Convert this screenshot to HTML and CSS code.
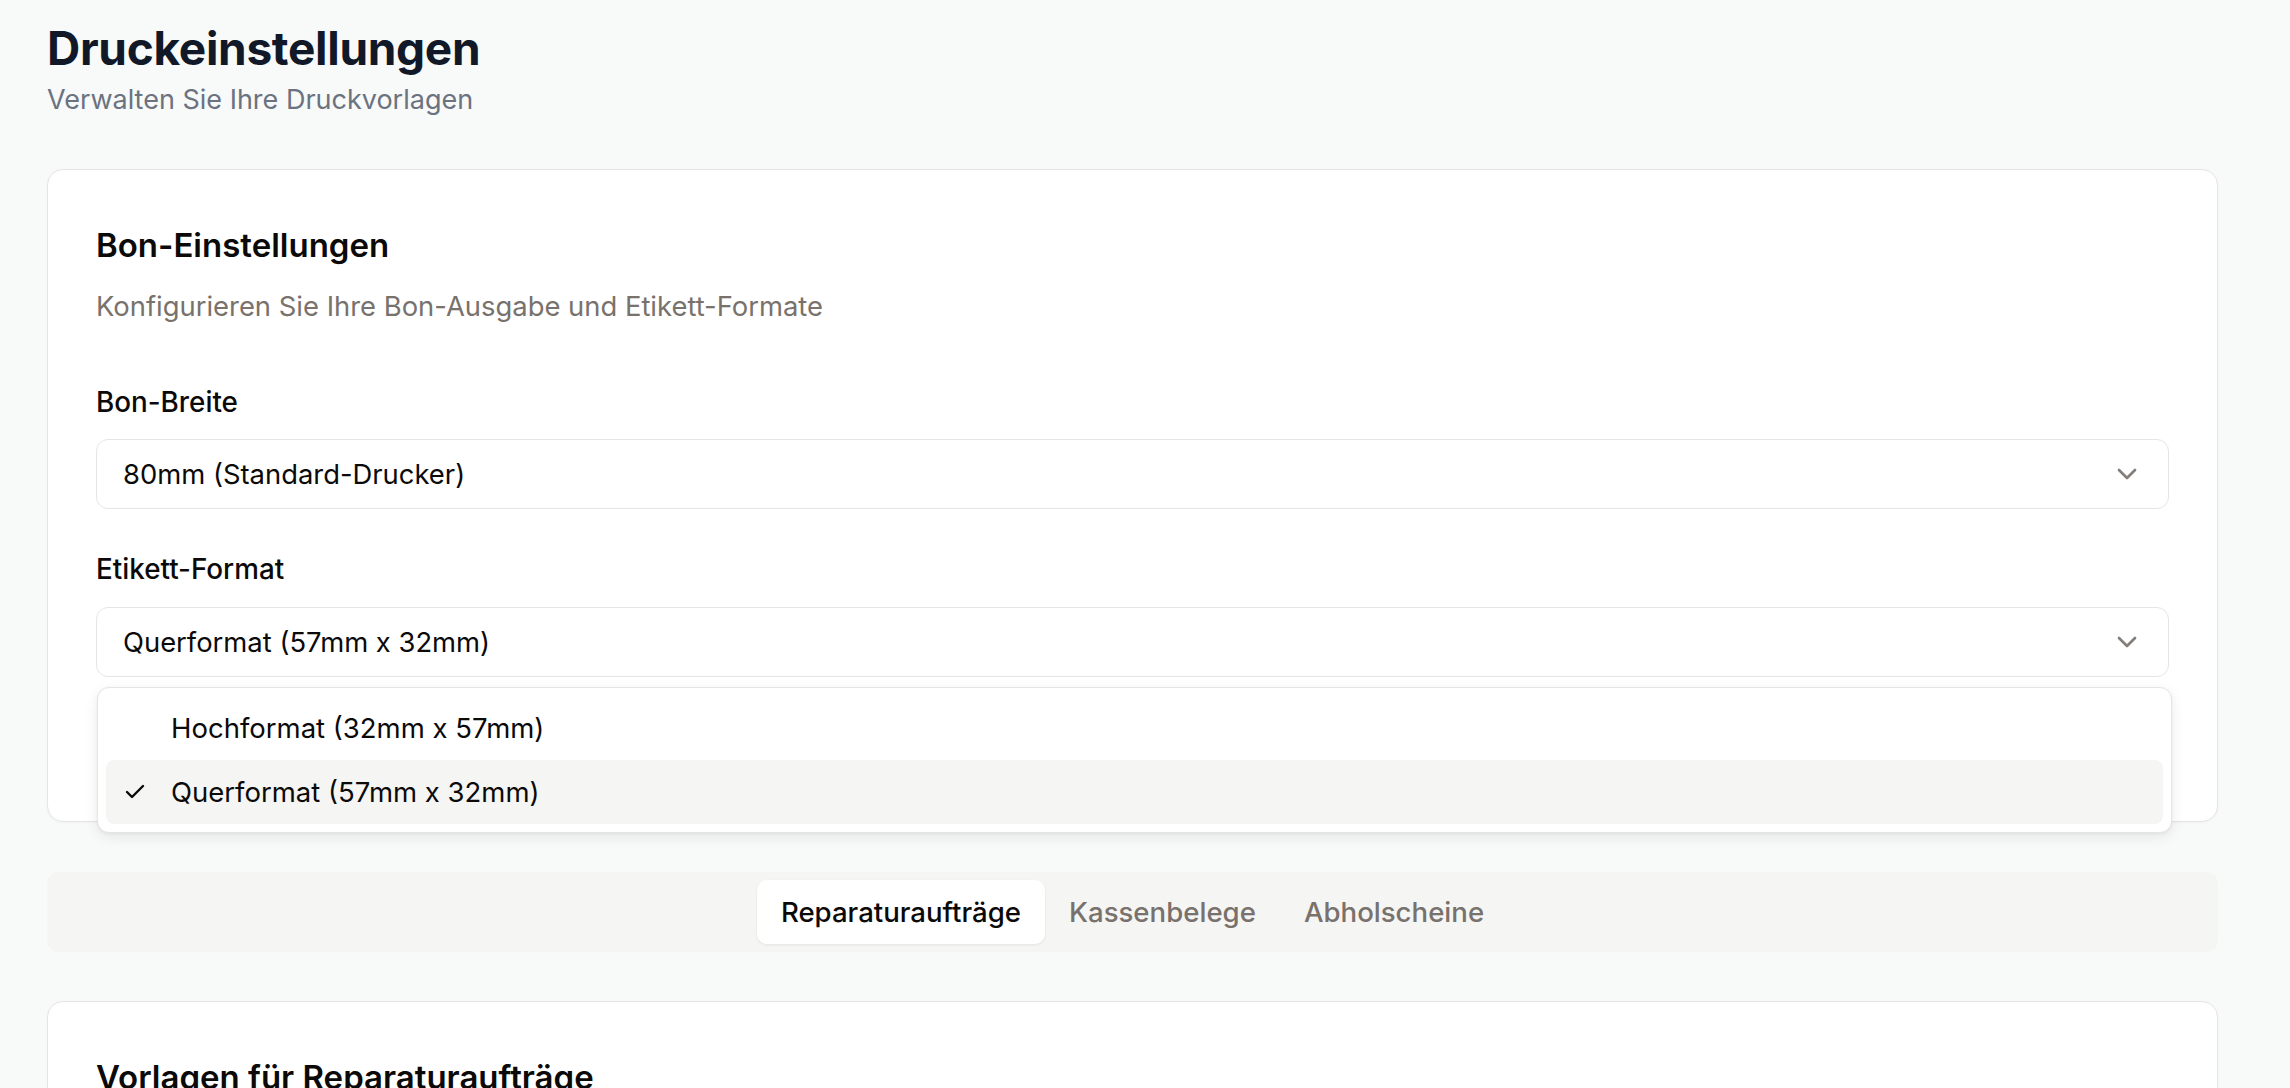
FILE: index.html
```html
<!DOCTYPE html>
<html lang="de">
<head>
<meta charset="utf-8">
<title>Druckeinstellungen</title>
<link rel="stylesheet" href="styles.css">
</head>
<body>
<div class="page">
  <header class="page-header">
    <h1 class="page-title">Druckeinstellungen</h1>
    <p class="page-subtitle">Verwalten Sie Ihre Druckvorlagen</p>
  </header>

  <section class="card">
    <h2 class="card-title">Bon-Einstellungen</h2>
    <p class="card-desc">Konfigurieren Sie Ihre Bon-Ausgabe und Etikett-Formate</p>

    <div class="field">
      <label class="field-label">Bon-Breite</label>
      <div class="select">
        <span class="select-value">80mm (Standard-Drucker)</span>
        <svg class="chevron" viewBox="0 0 24 24" fill="none" stroke="currentColor" stroke-width="2" stroke-linecap="round" stroke-linejoin="round"><path d="m6 9 6 6 6-6"/></svg>
      </div>
    </div>

    <div class="field field-second">
      <label class="field-label">Etikett-Format</label>
      <div class="select-wrap">
        <div class="select">
          <span class="select-value">Querformat (57mm x 32mm)</span>
          <svg class="chevron" viewBox="0 0 24 24" fill="none" stroke="currentColor" stroke-width="2" stroke-linecap="round" stroke-linejoin="round"><path d="m6 9 6 6 6-6"/></svg>
        </div>
        <div class="menu">
          <div class="menu-item">Hochformat (32mm x 57mm)</div>
          <div class="menu-item is-selected">
            <svg class="check" viewBox="0 0 24 24" fill="none" stroke="currentColor" stroke-width="2.4" stroke-linecap="round" stroke-linejoin="round"><path d="M20 6 9 17l-5-5"/></svg>
            Querformat (57mm x 32mm)
          </div>
        </div>
      </div>
    </div>

    <div class="card-filler"></div>
  </section>

  <nav class="tabs">
    <div class="tabs-list">
      <button class="tab is-active">Reparaturaufträge</button>
      <button class="tab">Kassenbelege</button>
      <button class="tab">Abholscheine</button>
    </div>
  </nav>

  <section class="card">
    <h2 class="card-title">Vorlagen für Reparaturaufträge</h2>
    <p class="card-desc">Verwalten Sie Ihre Vorlagen für Reparaturaufträge</p>
  </section>
</div>
</body>
</html>
```

FILE: styles.css
```css
* { box-sizing: border-box; }

html, body {
  margin: 0;
  padding: 0;
}

body {
  background: #f8f9f9;
  font-family: Inter, "Noto Sans", sans-serif;
  color: #0c0a09;
  overflow: hidden;
}

.page {
  padding: 21px 72px 0 47px;
}

.page-title {
  margin: 0;
  font-size: 46px;
  line-height: 54px;
  font-weight: 700;
  color: #111827;
  letter-spacing: -0.3px;
}

.page-subtitle {
  margin: 7px 0 0;
  font-size: 27px;
  line-height: 36px;
  color: #6b7280;
}

.page-header {
  margin-bottom: 51px;
}

.card {
  background: #fff;
  border: 1px solid #e7e5e4;
  border-radius: 16px;
  padding: 51px 48px 48px;
  box-shadow: 0 1px 3px rgba(0, 0, 0, 0.03);
}

.card-title {
  margin: 0;
  font-size: 33px;
  line-height: 48px;
  font-weight: 600;
  color: #0c0a09;
}

.card-desc {
  margin: 19px 0 0;
  font-size: 27.4px;
  line-height: 36px;
  color: #78716c;
}

.field {
  margin-top: 60px;
}

.field-second {
  margin-top: 42px;
}

.field-label {
  display: block;
  font-size: 27.8px;
  line-height: 36px;
  font-weight: 500;
  color: #0c0a09;
}

.field .select {
  margin-top: 19px;
}

.field-second .select-wrap {
  margin-top: 20px;
  position: relative;
}

.field-second .select {
  margin-top: 0;
}

.select {
  height: 70px;
  border: 1px solid #e7e5e4;
  border-radius: 12px;
  background: #fff;
  display: flex;
  align-items: center;
  justify-content: space-between;
  padding: 0 26px;
}

.select-value {
  font-size: 27.4px;
  color: #0c0a09;
}

.chevron {
  width: 32px;
  height: 32px;
  color: #78716c;
  opacity: 0.9;
  flex: none;
  margin-right: -1px;
}

.menu {
  position: absolute;
  top: calc(100% + 10px);
  left: 1px;
  right: -3px;
  background: #fff;
  border: 1px solid #e7e5e4;
  border-radius: 12px;
  padding: 8px;
  box-shadow: 0 4px 14px rgba(0, 0, 0, 0.08), 0 1px 3px rgba(0, 0, 0, 0.05);
  z-index: 5;
}

.menu-item {
  position: relative;
  height: 64px;
  display: flex;
  align-items: center;
  padding-left: 65px;
  font-size: 27.5px;
  color: #0c0a09;
  border-radius: 8px;
}

.menu-item.is-selected {
  background: #f5f5f4;
}

.check {
  position: absolute;
  left: 17px;
  top: 50%;
  width: 24px;
  height: 24px;
  margin-top: -12px;
}

.card-filler {
  height: 96px;
}

.tabs {
  margin: 50px 0 49px;
  background: #f5f5f4;
  border-radius: 12px;
  padding: 8px;
  display: flex;
  justify-content: center;
}

.tabs-list {
  display: flex;
}

.tab {
  height: 64px;
  padding: 0 24px;
  border: 0;
  background: transparent;
  font-family: Inter, "Noto Sans", sans-serif;
  font-size: 27.6px;
  font-weight: 500;
  color: #78716c;
  border-radius: 10px;
}

.tab.is-active {
  background: #fff;
  color: #0c0a09;
  box-shadow: 0 1px 3px rgba(0, 0, 0, 0.08);
}
```
